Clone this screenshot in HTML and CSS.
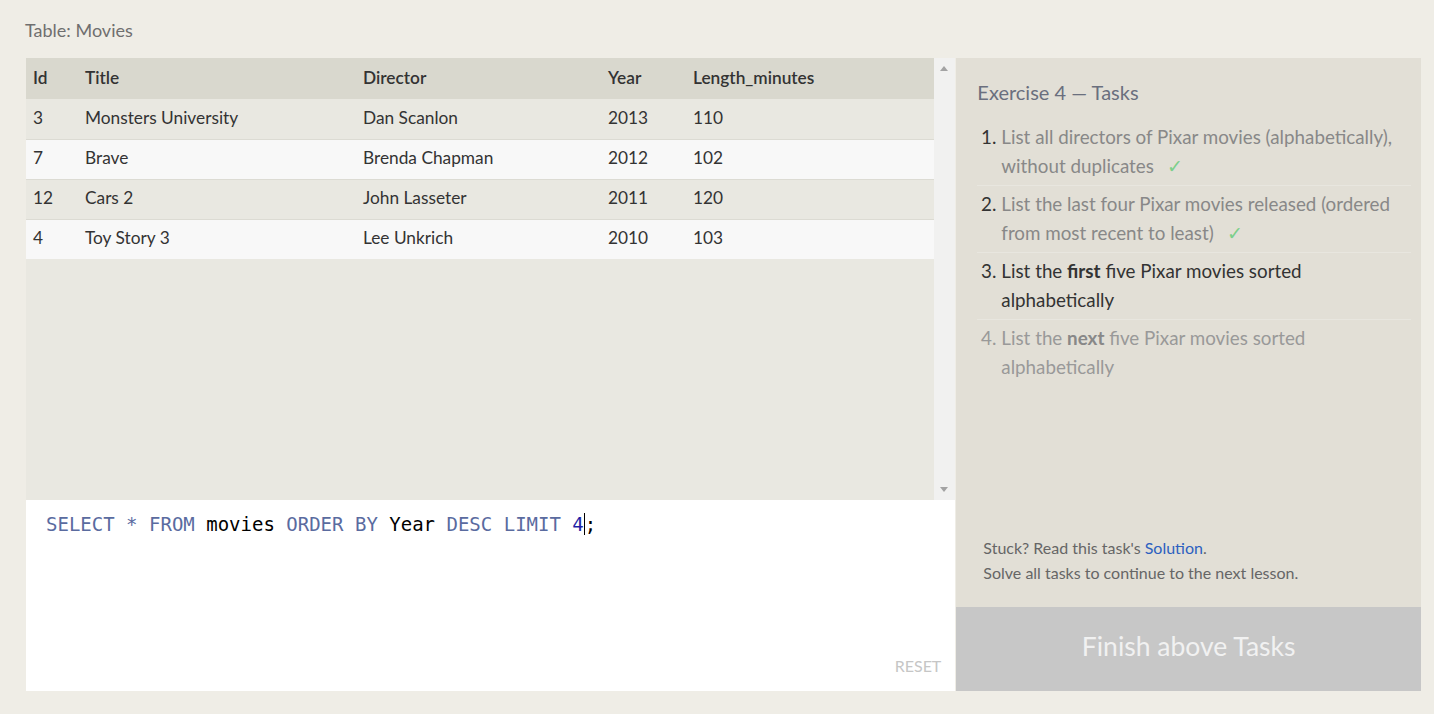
FILE: index.html
```html
<!DOCTYPE html>
<html>
<head>
<meta charset="utf-8">
<link rel="stylesheet" href="styles.css">
</head>
<body>
<div class="page">
  <div class="caption">Table: Movies</div>
  <div class="workspace">
    <div class="left">
      <div class="table-wrap">
        <div class="table-scroll">
          <table class="results">
            <thead>
              <tr><th class="c-id">Id</th><th class="c-title">Title</th><th class="c-dir">Director</th><th class="c-year">Year</th><th>Length_minutes</th></tr>
            </thead>
            <tbody>
              <tr class="odd"><td>3</td><td>Monsters University</td><td>Dan Scanlon</td><td>2013</td><td>110</td></tr>
              <tr class="even"><td>7</td><td>Brave</td><td>Brenda Chapman</td><td>2012</td><td>102</td></tr>
              <tr class="odd"><td>12</td><td>Cars 2</td><td>John Lasseter</td><td>2011</td><td>120</td></tr>
              <tr class="even"><td>4</td><td>Toy Story 3</td><td>Lee Unkrich</td><td>2010</td><td>103</td></tr>
            </tbody>
          </table>
        </div>
        <div class="scrollbar">
          <span class="arrow up"></span>
          <span class="arrow down"></span>
        </div>
      </div>
      <div class="editor">
        <div class="code"><span class="kw">SELECT</span> <span class="kw">*</span> <span class="kw">FROM</span> movies <span class="kw">ORDER</span> <span class="kw">BY</span> Year <span class="kw">DESC</span> <span class="kw">LIMIT</span> <span class="num">4</span><span class="cursor"></span>;</div>
        <div class="reset">RESET</div>
      </div>
    </div>
    <div class="right">
      <div class="tasks">
        <h2 class="tasks-title">Exercise 4 — Tasks</h2>
        <ol class="task-list">
          <li class="done"><span class="n">1.</span><span class="t">List all directors of Pixar movies (alphabetically), without duplicates <span class="check">✓</span></span></li>
          <li class="done"><span class="n">2.</span><span class="t">List the last four Pixar movies released (ordered from most recent to least) <span class="check">✓</span></span></li>
          <li class="active"><span class="n">3.</span><span class="t">List the <b>first</b> five Pixar movies sorted alphabetically</span></li>
          <li class="todo"><span class="n">4.</span><span class="t">List the <b>next</b> five Pixar movies sorted alphabetically</span></li>
        </ol>
      </div>
      <div class="help">
        <div>Stuck? Read this task's <a class="link">Solution</a>.</div>
        <div>Solve all tasks to continue to the next lesson.</div>
      </div>
      <div class="finish">Finish above Tasks</div>
    </div>
  </div>
</div>
</body>
</html>
```
FILE: styles.css
```css
html, body {
  margin: 0;
  padding: 0;
  background: #efede6;
}
body {
  font-family: Lato, "Open Sans", sans-serif;
  color: #333;
}
.page {
  padding: 18px 13px 0 25px;
  width: 1396px;
}
.caption {
  font-size: 18px;
  color: #6f6f6f;
  height: 40px;
  line-height: 24px;
}
.workspace {
  display: flex;
  height: 633px;
  margin-left: 1px;
}
.left {
  width: 930px;
  display: flex;
  flex-direction: column;
}
.table-wrap {
  height: 442px;
  display: flex;
  background: #e9e8e1;
}
.table-scroll {
  flex: 1;
}
.results {
  width: 100%;
  border-collapse: collapse;
  table-layout: fixed;
  font-size: 17.3px;
}
.results th,
.results td {
  box-sizing: border-box;
  text-align: left;
  padding: 0 0 3px 7px;
  color: #333;
}
.results th {
  font-weight: 600;
  background: #d9d8ce;
  height: 41px;
}
.results td {
  height: 40px;
}
.c-id { width: 52px; }
.c-title { width: 278px; }
.c-dir { width: 245px; }
.c-year { width: 85px; }
.results tr.odd td { background: #e9e8e1; border-bottom: 1px solid #dcdbd3; }
.results tr.even td { background: #f8f8f8; border-bottom: 1px solid #dcdbd3; }
.results tr:last-child td { border-bottom: none; }
.scrollbar {
  width: 21px;
  background: #f1f1f0;
  position: relative;
}
.arrow {
  position: absolute;
  left: 6px;
  width: 0;
  height: 0;
  border-left: 4px solid transparent;
  border-right: 4px solid transparent;
}
.arrow.up { top: 8px; border-bottom: 5px solid #a3a3a3; }
.arrow.down { bottom: 8px; border-top: 5px solid #a3a3a3; }
.editor {
  flex: 1;
  background: #fff;
  display: flex;
  flex-direction: column;
  justify-content: space-between;
  padding: 12px 14px 16px 20px;
}
.code {
  font-family: "DejaVu Sans Mono", "Liberation Mono", monospace;
  font-size: 19px;
  color: #000;
  line-height: 24px;
}
.kw { color: #5a6b9f; }
.num { color: #1f1fa5; }
.cursor {
  display: inline-block;
  width: 1px;
  height: 22px;
  background: #000;
  vertical-align: -4px;
}
.reset {
  align-self: flex-end;
  font-size: 16px;
  color: #c6c6c6;
}
.right {
  width: 465px;
  margin-left: 1px;
  background: #e2dfd6;
  display: flex;
  flex-direction: column;
}
.tasks {
  flex: 1;
  padding: 19px 10px 0 21px;
}
.tasks-title {
  margin: 0 0 12px;
  font-size: 20px;
  font-weight: 400;
  color: #6a6f7e;
  line-height: 30px;
}
.task-list {
  list-style: none;
  margin: 0;
  padding: 0;
}
.task-list li {
  display: flex;
  font-size: 18.8px;
  line-height: 28.5px;
  padding: 4px 0 5px;
  border-bottom: 1px solid #e8e6df;
}
.task-list li:last-child { border-bottom: none; }
.task-list .n {
  box-sizing: border-box;
  width: 24px;
  flex: none;
  text-align: right;
  padding-right: 5px;
}
.task-list .t { flex: 1; }
.task-list li.done .n { color: #333; }
.task-list li.done .t { color: #888; }
.task-list li.active { color: #333; }
.task-list li.todo { color: #999; }
.task-list li.todo b { color: #888; }
.check {
  color: #7ccf8a;
  margin-left: 8px;
}
.help {
  padding: 0 0 22px 27px;
  font-size: 16px;
  color: #666;
  line-height: 25px;
}
.link { color: #2c5fc0; }
.finish {
  box-sizing: border-box;
  height: 84px;
  padding-bottom: 7px;
  background: #c7c7c7;
  color: #f1f1f1;
  font-size: 26.5px;
  display: flex;
  align-items: center;
  justify-content: center;
}
```
